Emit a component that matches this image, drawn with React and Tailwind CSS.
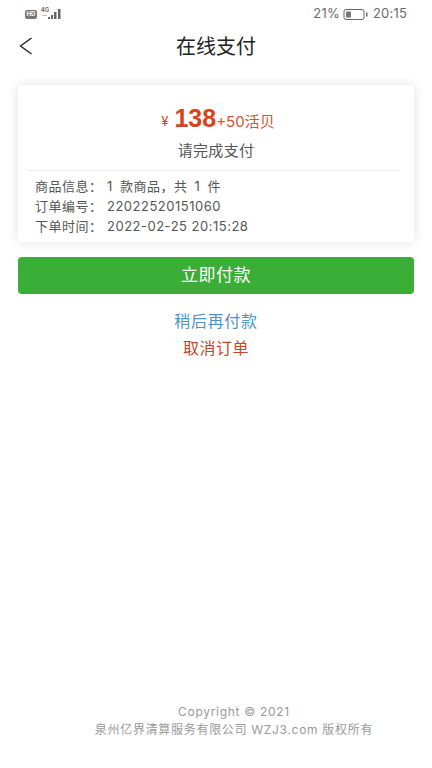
import React from "react";

const cjk = "font-['Inter','Noto_Sans_CJK_SC',sans-serif]";

function StatusBar() {
  return (
    <div className="flex h-[27px] items-center justify-between pl-[25px] pr-[25px] pt-[1px] text-[13px] tracking-[0.2px] text-[#6a6a6a]">
      <div className="flex items-center gap-[4px]">
        <span className="flex h-[9px] w-[12px] items-center justify-center rounded-[2px] bg-[#777777] text-[6px] font-bold leading-none tracking-normal text-white">
          HD
        </span>
        <svg width="21" height="14" viewBox="0 0 21 14" fill="#666666">
          <text x="0" y="5" fontSize="5.5" fontWeight="700" fontFamily="Inter, sans-serif">4G</text>
          <rect x="1" y="8" width="5" height="1" opacity="0.4" />
          <rect x="7" y="10" width="2" height="2" />
          <rect x="10" y="8" width="2" height="4" />
          <rect x="13" y="5" width="2.5" height="7" />
          <rect x="17" y="2" width="2.5" height="10" />
        </svg>
      </div>
      <div className="flex items-center gap-[3px]">
        <span className="ml-[1px]">21%</span>
        <svg width="25" height="11" viewBox="0 0 25 11" fill="none">
          <rect x="1" y="0.5" width="20" height="10" rx="2" stroke="#666666" />
          <rect x="3" y="2.5" width="5" height="6" fill="#777777" />
          <rect x="23" y="3.5" width="1.5" height="4" fill="#666666" />
        </svg>
        <span className="ml-[2px]">20:15</span>
      </div>
    </div>
  );
}

function InfoRow({ label, children }) {
  return (
    <div className="flex h-[20px] items-center">
      <span className="w-[72px]">{label}</span>
      {children}
    </div>
  );
}

export default function App() {
  return (
    <div className={`relative flex h-[768px] w-[432px] flex-col overflow-hidden bg-white ${cjk}`}>
      <StatusBar />

      {/* Header */}
      <div className="relative flex h-[38px] items-center justify-center">
        <svg className="absolute left-[19px] top-[10px]" width="14" height="18" viewBox="0 0 14 18" fill="none">
          <path d="M12.5 1 L1.5 9 L12.5 17" stroke="#222222" strokeWidth="1.4" />
        </svg>
        <span className="pt-[1px] text-[20px] text-[#222222]">在线支付</span>
      </div>

      {/* Order card */}
      <div className="mx-[18px] mt-[20px] h-[157px] rounded-[3px] bg-white shadow-[0_0_12px_rgba(0,0,0,0.12)]">
        <div className="flex h-[48px] items-end justify-center pl-[4px] text-[#d9431a]">
          <span className="mb-[5px] mr-[6px] text-[13px] leading-none">¥</span>
          <span className="text-[25px] font-bold leading-[30px] font-['Liberation_Sans',sans-serif]">138</span>
          <span className="text-[15px] leading-[22px] text-[#d4542d]">+50活贝</span>
        </div>
        <div className="mt-[8px] text-center text-[15px] leading-[20px] tracking-[0.3px] text-[#555555]">请完成支付</div>
        <div className="ml-[10px] mr-[16px] mt-[9px] border-t border-[#ececec]" />
        <div className="mt-[6px] pl-[17px] text-[13px] tracking-[0.5px] text-[#555555]">
          <InfoRow label="商品信息：">
            <span className="[word-spacing:3px]">1 款商品，共 1 件</span>
          </InfoRow>
          <InfoRow label="订单编号：">
            <span>22022520151060</span>
          </InfoRow>
          <InfoRow label="下单时间：">
            <span>2022-02-25 20:15:28</span>
          </InfoRow>
        </div>
      </div>

      {/* Actions */}
      <div className="mx-[18px] mt-[15px] flex h-[37px] items-center justify-center rounded-[4px] bg-[#3bae38] text-[17px] tracking-[0.5px] text-white">
        立即付款
      </div>
      <div className="mt-[17px] text-center text-[16px] leading-[20px] tracking-[0.7px] text-[#4b93c5]">稍后再付款</div>
      <div className="mt-[7px] text-center text-[16px] leading-[20px] tracking-[0.5px] text-[#c4472a]">取消订单</div>

      {/* Footer */}
      <div className="mt-auto pb-[29px] pl-[36px] text-center text-[12px] leading-[18px] tracking-[0.7px] text-[#999999]">
        <div>Copyright © 2021</div>
        <div>泉州亿界清算服务有限公司 WZJ3.com 版权所有</div>
      </div>
    </div>
  );
}
